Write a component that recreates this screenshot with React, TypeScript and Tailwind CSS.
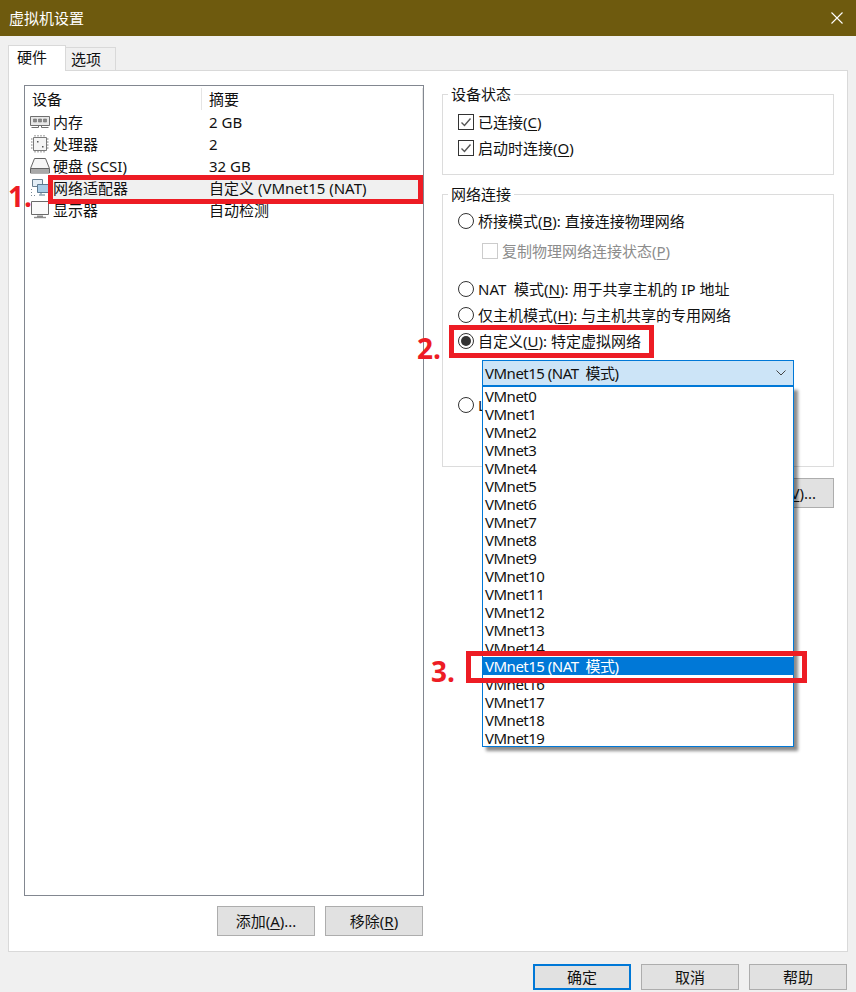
const RED = "absolute border-[5px] border-[#ed1c24]";
const networks = Array.from({ length: 20 }, (_, i) => `VMnet${i}`);

function Key({ label }: { label: string }) {
  return (
    <>
      (<u className="underline-offset-2">{label}</u>)
    </>
  );
}

function Checkbox({ checked, disabled }: { checked?: boolean; disabled?: boolean }) {
  return (
    <span
      className={`flex h-4 w-4 shrink-0 items-center justify-center border bg-white ${
        disabled ? "border-[#cccccc]" : "border-[#333333]"
      }`}
    >
      {checked && (
        <svg viewBox="0 0 14 14" className="h-[14px] w-[14px]" fill="none" stroke="#555555" strokeWidth="1.4">
          <path d="M2.5 7.5 5.5 10.5 11.5 3.5" />
        </svg>
      )}
    </span>
  );
}

function Radio({ checked }: { checked?: boolean }) {
  return (
    <span className="flex h-4 w-4 shrink-0 items-center justify-center rounded-full border border-[#333333] bg-white">
      {checked && <span className="h-[10px] w-[10px] rounded-full bg-[#333333]" />}
    </span>
  );
}

function Button({ children, primary, width = "w-[98px]" }: { children: React.ReactNode; primary?: boolean; width?: string }) {
  return (
    <div
      className={`flex h-full items-center justify-center bg-[#e1e1e1] ${width} ${
        primary ? "border-2 border-[#0078d7]" : "border border-[#adadad]"
      }`}
    >
      {children}
    </div>
  );
}

function MemoryIcon() {
  return (
    <svg viewBox="0 0 20 16" className="h-4 w-5" fill="none" stroke="#6f6f6f">
      <path d="M.5 2.5h19v9H.5z" fill="#e8e8e8" />
      <path d="M3.5 5h3v3h-3zM8.5 5h3v3h-3zM13.5 5h3v3h-3z" fill="#8a8a8a" strokeWidth=".6" />
      <path d="M1.5 13.5h7v-2h3v2h7" />
    </svg>
  );
}

function CpuIcon() {
  return (
    <svg viewBox="0 0 20 20" className="h-5 w-5" fill="none" stroke="#7a7a7a">
      <path d="M3.5 3.5h13v13h-13z" fill="#f4f4f4" />
      <path d="M5 1v2M8 1v2M11 1v2M14 1v2M5 17v2M8 17v2M11 17v2M14 17v2M1 5h2M1 8h2M1 11h2M1 14h2M17 5h2M17 8h2M17 11h2M17 14h2" strokeDasharray="1.5 .5" />
      <path d="M7 7h1.5v1.5H7zM12 12h1.5v1.5H12z" fill="#555555" stroke="none" />
    </svg>
  );
}

function DiskIcon() {
  return (
    <svg viewBox="0 0 20 18" className="h-[18px] w-5" fill="none" stroke="#666666">
      <path d="M4.5 1.5h11l4 10v4.500h-19v-4.500zM.5 11.500h19" fill="#f6f6f6" />
      <path d="M1 12h18v4H1z" fill="#a8a8a8" stroke="none" />
    </svg>
  );
}

function NetworkIcon() {
  return (
    <svg viewBox="0 0 20 20" className="h-5 w-5" fill="none">
      <path d="M2.500 1.500h10v7h-10z" fill="#e4eef6" stroke="#6a7f90" />
      <path d="M7.500 6.500h11v8h-11z" fill="#a9cbe6" stroke="#5d7b92" />
      <path d="M11 14.500v2M9 17h6" stroke="#5d7b92" />
      <path d="M1 11h1v1H1zM1 14h1v1H1zM1 17h1v1H1zM4 17h1v1H4z" fill="#7a8a96" />
    </svg>
  );
}

function MonitorIcon() {
  return (
    <svg viewBox="0 0 20 18" className="h-[18px] w-5" fill="none" stroke="#6a6a6a">
      <path d="M1.500 .5h17v13h-17z" fill="#fafafa" />
      <path d="M7 14.500h6v1.500H7z" fill="#8c8c8c" stroke="none" />
      <path d="M4 16.500h12" stroke="#8c8c8c" strokeWidth="1.400" />
    </svg>
  );
}

const devices = [
  { icon: <MemoryIcon />, name: "内存", summary: "2 GB" },
  { icon: <CpuIcon />, name: "处理器", summary: "2" },
  { icon: <DiskIcon />, name: "硬盘 (SCSI)", summary: "32 GB" },
  { icon: <NetworkIcon />, name: "网络适配器", summary: "自定义 (VMnet15 (NAT)", active: true },
  { icon: <MonitorIcon />, name: "显示器", summary: "自动检测" },
];

export default function App() {
  return (
    <div className="relative flex h-[992px] w-[856px] flex-col overflow-hidden bg-[#f0f0f0] font-['Noto_Sans','Noto_Sans_CJK_SC',sans-serif] text-[15px] leading-[20px] text-[#111111]">
      {/* Title bar */}
      <div className="flex h-9 shrink-0 items-center justify-between bg-[#6e5a0e] pr-[13px] pl-[9px] text-white">
        <span>虚拟机设置</span>
        <svg viewBox="0 0 12 12" className="h-3 w-3" stroke="white" strokeWidth="1.100">
          <path d="M.5.5l11 11M11.500.5l-11 11" />
        </svg>
      </div>

      {/* Tabs */}
      <div className="relative z-10 mt-[9px] flex h-[26px] shrink-0 items-end pl-2">
        <div className="flex h-[26px] w-[58px] items-center border border-b-0 border-[#d9d9d9] bg-white pb-1 pl-2">硬件</div>
        <div className="mb-[1px] flex h-[23px] w-[50px] items-center border border-b-0 border-l-0 border-[#d9d9d9] bg-[#f0f0f0] pl-[5px]">选项</div>
      </div>

      {/* Panel */}
      <div className="mx-2 -mt-px flex h-[882px] shrink-0 border border-[#d9d9d9] bg-white pt-[14px] pl-[15px]">
        <div className="flex w-[400px] shrink-0 flex-col">
          <div className="h-[811px] border border-[#828790] bg-white">
            <div className="flex h-[25px] items-center">
              <div className="flex h-[22px] w-[177px] items-center border-r border-[#e5e5e5] pl-[7px]">设备</div>
              <div className="flex h-[22px] flex-1 items-center border-r border-[#e5e5e5] pl-[7px]">摘要</div>
            </div>
            {devices.map((d) => (
              <div key={d.name} className="flex h-[22px] items-center">
                <span className="ml-[5px] flex w-5 shrink-0 justify-center">{d.icon}</span>
                <div className={`ml-[1px] flex h-[22px] flex-1 items-center pl-[2px] ${d.active ? "bg-[#f0f0f0]" : ""}`}>
                  <span className="w-[156px] shrink-0 whitespace-nowrap">{d.name}</span>
                  <span className="whitespace-nowrap">{d.summary}</span>
                </div>
              </div>
            ))}
          </div>
          <div className="mt-[10px] flex h-[30px] justify-end gap-[10px] pr-px">
            <Button>
              添加
              <Key label="A" />
              ...
            </Button>
            <Button>
              移除
              <Key label="R" />
            </Button>
          </div>
        </div>

        <div className="ml-[18px] flex w-[392px] shrink-0 flex-col">
          <fieldset className="-mt-px h-[91px] border border-[#dcdcdc] pl-[15px]">
            <legend className="-ml-[10px] px-[3px]">设备状态</legend>
            <div className="mt-[5px] flex h-[26px] items-center gap-1">
              <Checkbox checked />
              <span>
                已连接
                <Key label="C" />
              </span>
            </div>
            <div className="flex h-[26px] items-center gap-1">
              <Checkbox checked />
              <span>
                启动时连接
                <Key label="O" />
              </span>
            </div>
          </fieldset>

          <fieldset className="mt-[9px] h-[283px] border border-[#dcdcdc] pl-[15px]">
            <legend className="-ml-[10px] px-[3px]">网络连接</legend>
            <div className="mt-[4px] flex h-[26px] items-center gap-1">
              <Radio />
              <span>
                桥接模式
                <Key label="B" />: 直接连接物理网络
              </span>
            </div>
            <div className="mt-[4px] flex h-[26px] items-center gap-1 pl-6 text-[#8c8c8c]">
              <Checkbox disabled />
              <span>
                复制物理网络连接状态
                <Key label="P" />
              </span>
            </div>
            <div className="mt-[12px] flex h-[26px] items-center gap-1">
              <Radio />
              <span>
                NAT{"\u00a0"} 模式
                <Key label="N" />: 用于共享主机的 IP 地址
              </span>
            </div>
            <div className="flex h-[26px] items-center gap-1">
              <Radio />
              <span>
                仅主机模式
                <Key label="H" />: 与主机共享的专用网络
              </span>
            </div>
            <div className="flex h-[26px] items-center gap-1">
              <Radio checked />
              <span>
                自定义
                <Key label="U" />: 特定虚拟网络
              </span>
            </div>
            <div className="ml-6 mt-[6px] flex h-[26px] w-[312px] items-center justify-between border border-[#0078d7] bg-[#cce4f7] pr-[7px] pl-[2px]">
              <span className="tracking-[-0.5px]">VMnet15 (NAT{"\u00a0"} 模式)</span>
              <svg viewBox="0 0 10 6" className="h-[6px] w-[10px]" fill="none" stroke="#444444">
                <path d="M.5.5 5 5 9.500.5" />
              </svg>
            </div>
            <div className="mt-[6px] flex h-[26px] items-center gap-1">
              <Radio />
              <span>L</span>
            </div>
          </fieldset>

          {/* Only the end of this button's label shows past the open list */}
          <div className="mt-[11px] flex h-[30px] justify-end">
            <div className="flex h-full w-[98px] items-center justify-end border border-[#adadad] bg-[#e1e1e1] pr-[17px]">
              <u className="underline-offset-2">V</u>)...
            </div>
          </div>
        </div>
      </div>

      {/* Footer */}
      <div className="mt-[12px] flex h-[26px] shrink-0 justify-end gap-[10px] pr-[9px]">
        <Button primary>确定</Button>
        <Button>取消</Button>
        <Button>帮助</Button>
      </div>

      {/* Open dropdown */}
      <div className="absolute top-[386px] left-[482px] z-20 h-[361px] w-[312px] border border-[#0078d7] bg-white leading-[18px] tracking-[-0.5px] shadow-[4px_4px_3px_rgba(0,0,0,0.45)]">
        {networks.map((n, i) =>
          i === 15 ? (
            <div key={n} className="flex h-[18px] items-center bg-[#0078d7] pl-[2px] text-white">
              VMnet15 (NAT{"\u00a0"} 模式)
            </div>
          ) : (
            <div key={n} className="flex h-[18px] items-center pl-[2px]">
              {n}
            </div>
          )
        )}
      </div>

      {/* Red annotations */}
      <div className={`${RED} top-[175px] left-[48px] z-30 h-[29px] w-[375px]`} />
      <div className={`${RED} top-[325px] left-[449px] z-30 h-[33px] w-[205px]`} />
      <div className={`${RED} top-[651px] left-[466px] z-30 h-[32px] w-[341px]`} />
      <span className="absolute top-[177px] left-[8px] z-30 font-['Open_Sans',sans-serif] text-[28px] leading-[38px] font-bold text-[#ed1c24]">1.</span>
      <span className="absolute top-[329px] left-[417px] z-30 font-['Open_Sans',sans-serif] text-[28px] leading-[38px] font-bold text-[#ed1c24]">2.</span>
      <span className="absolute top-[652px] left-[431px] z-30 font-['Open_Sans',sans-serif] text-[28px] leading-[38px] font-bold text-[#ed1c24]">3.</span>
    </div>
  );
}
